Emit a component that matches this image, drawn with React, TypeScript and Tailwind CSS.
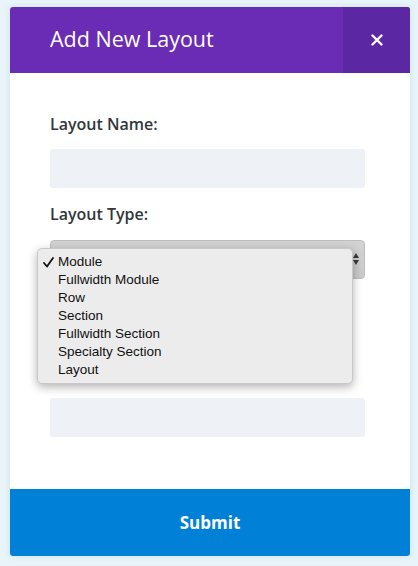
import React from "react";

const items = ["Module", "Fullwidth Module", "Row", "Section", "Fullwidth Section", "Specialty Section", "Layout"];

export default function App() {
  return (
    <div className="w-[418px] h-[566px] bg-[#e8f4f9] pt-[7px] px-[10px] font-['Open_Sans',sans-serif]">
      <div className="w-[400px] h-[549px] bg-white rounded-[3px] flex flex-col overflow-hidden shadow-[0_0_6px_rgba(150,200,220,0.35)]">
        <div className="h-[66px] flex bg-[#6a2bb5] shrink-0">
          <div className="flex-1 flex items-center pl-10 text-white text-[21.5px] leading-none pb-[2px]">Add New Layout</div>
          <div className="w-[67px] flex items-center justify-center bg-[#5c27a2] text-white">
            <svg width="12" height="12" viewBox="0 0 12 12" className="mb-[1px]">
              <path d="M1.5 1.5 L10.5 10.5 M10.5 1.5 L1.5 10.5" stroke="white" strokeWidth="2.4" strokeLinecap="round" />
            </svg>
          </div>
        </div>
        <div className="flex-1 flex flex-col pl-10 pr-[45px] pt-[40px]">
          <div className="text-[16px] leading-[22px] font-semibold text-[#32373c]">Layout Name:</div>
          <div className="mt-[14px] h-[39px] bg-[#eef1f5] rounded-[3px]" />
          <div className="mt-[15px] text-[16px] leading-[22px] font-semibold text-[#32373c]">Layout Type:</div>
          <div className="relative mt-[15px] h-[39px] rounded-[4px] bg-gradient-to-b from-[#d3d3d3] to-[#c9c9c9] border border-[#bdbdbd]">
            <svg width="8" height="14" viewBox="0 0 8 14" className="absolute right-[4px] top-[11px]">
              <path d="M4 1 L7 6 L1 6 Z M4 13 L7 8 L1 8 Z" fill="#3a3a3a" />
            </svg>
            <div className="absolute left-[-14px] top-[7px] w-[316px] rounded-[5px] bg-[#ececec] border border-[#c8c8c8] shadow-[0_3px_10px_rgba(0,0,0,0.3)] py-[4px] font-['Liberation_Sans',Arial,sans-serif] text-[13.5px] text-[#111] z-10">
              {items.map((t, i) => (
                <div key={t} className="relative h-[18px] leading-[18px] pl-[20px]">
                  {i === 0 && (
                    <svg width="11" height="11" viewBox="0 0 11 11" className="absolute left-[5px] top-[4px]">
                      <path d="M1 6 L4 9.5 L10 1" stroke="#111" strokeWidth="1.8" fill="none" strokeLinecap="round" strokeLinejoin="round" />
                    </svg>
                  )}
                  {t}
                </div>
              ))}
            </div>
          </div>
          <div className="h-[119px]" />
          <div className="h-[39px] bg-[#eef1f5] rounded-[3px]" />
        </div>
        <div className="h-[67px] shrink-0 bg-[#0180d8] flex items-center justify-center text-white text-[17px] font-bold">Submit</div>
      </div>
    </div>
  );
}
